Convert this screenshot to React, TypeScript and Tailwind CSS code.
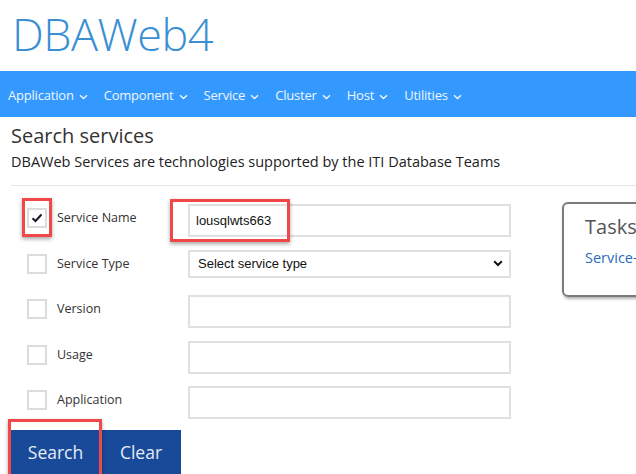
import React from "react";

const Chevron = () => (
  <svg width="9" height="6" viewBox="0 0 9 6" className="ml-[5px] mt-[2px]" fill="none">
    <path d="M1 1.2 L4.5 4.6 L8 1.2" stroke="currentColor" strokeWidth="1.4" />
  </svg>
);

const navItems = ["Application", "Component", "Service", "Cluster", "Host", "Utilities"];

const rows: { label: string; kind: "input" | "select"; value?: string; checked?: boolean }[] = [
  { label: "Service Name", kind: "input", value: "lousqlwts663", checked: true },
  { label: "Service Type", kind: "select" },
  { label: "Version", kind: "input" },
  { label: "Usage", kind: "input" },
  { label: "Application", kind: "input" },
];

export default function App() {
  return (
    <div className="w-[636px] h-[474px] overflow-hidden bg-white font-['Open_Sans',sans-serif] text-[#333]">
      <div className="h-[71px] pl-[12px] pt-[3px] text-[45px] leading-[62px] font-light text-[#3a8fd3] tracking-[-0.5px]">
        DBAWeb4
      </div>
      <nav className="h-[46px] bg-[#3399ff] flex items-center pl-[8px] pt-[3px] gap-[16px] text-[13px] tracking-[-0.2px] text-[#eef5ff]">
        {navItems.map((n) => (
          <div key={n} className="flex items-center">
            <span>{n}</span>
            <Chevron />
          </div>
        ))}
      </nav>
      <div className="px-[11px]">
        <h1 className="text-[20px] leading-[26px] mt-[6px] text-[#333]">Search services</h1>
        <p className="text-[14.5px] leading-[20px] mt-[3px] text-[#222]">
          DBAWeb Services are technologies supported by the ITI Database Teams
        </p>
        <div className="mt-[13px] border-t border-[#e5e5e5] w-[700px]" />
        <div className="flex">
          <div className="w-[510px] shrink-0 pt-[18px]">
            {rows.map((r) => (
              <div key={r.label} className="flex items-start h-[45.6px]">
                <div className="relative w-[20px] h-[20px] ml-[16px] mt-[4px] border-2 border-[#dcdcdc] bg-white flex items-center justify-center">
                  {r.checked && (
                    <>
                      <svg width="12" height="10" viewBox="0 0 12 10">
                        <path d="M1.5 5.2 L4.5 8 L10.5 1.5" stroke="#1a1a2a" strokeWidth="2" fill="none" />
                      </svg>
                      <div className="absolute left-[-7px] top-[-12px] w-[30px] h-[39px] border-[3px] border-[#f04848] shadow-[0_2px_4px_rgba(0,0,0,0.35)]" />
                    </>
                  )}
                </div>
                <div className="ml-[10px] w-[131px] text-[12.5px] leading-[18px] mt-[5px] text-[#333]">{r.label}</div>
                {r.kind === "input" ? (
                  <div className="relative w-[323px] h-[33px] border-2 border-[#e0e0e0] bg-white flex items-center pl-[6px] font-['Liberation_Sans',sans-serif] text-[13px] text-[#111]">
                    {r.value}
                    {r.value && (
                      <div className="absolute left-[-20px] top-[-7px] w-[120px] h-[43px] border-[3px] border-[#f04848] shadow-[0_2px_4px_rgba(0,0,0,0.35)]" />
                    )}
                  </div>
                ) : (
                  <div className="w-[323px] h-[28px] border-2 border-[#e0e0e0] bg-white flex items-center justify-between pl-[8px] pr-[6px] font-['Liberation_Sans',sans-serif] text-[13px] text-[#111]">
                    <span>Select service type</span>
                    <svg width="10" height="7" viewBox="0 0 10 7">
                      <path d="M1.2 1.3 L5 5 L8.8 1.3" stroke="#111" strokeWidth="2" fill="none" />
                    </svg>
                  </div>
                )}
              </div>
            ))}
            <div className="flex mt-[-2px]">
              <div className="relative w-[89px] h-[44px] bg-[#184a99] text-[#e6ecf6] text-[17.5px] flex items-center justify-center">
                Search
                <div className="absolute left-[-3px] top-[-11px] w-[94px] h-[60px] border-[3px] border-[#f04848] shadow-[0_2px_4px_rgba(0,0,0,0.35)]" />
              </div>
              <div className="ml-[1px] w-[80px] h-[44px] bg-[#184a99] text-[#e6ecf6] text-[17.5px] flex items-center justify-center">
                Clear
              </div>
            </div>
          </div>
          <div className="ml-[41px] mt-[16px] w-[200px] h-[95px] shrink-0 rounded-[6px] border-2 border-[#7a7a7a] shadow-[1px_2px_3px_rgba(0,0,0,0.3)] pl-[21px] pt-[10px]">
            <div className="text-[20px] leading-[26px] text-[#555]">Tasks</div>
            <div className="text-[14.5px] leading-[20px] mt-[8px] text-[#2a6cba]">Service-</div>
          </div>
        </div>
      </div>
    </div>
  );
}
